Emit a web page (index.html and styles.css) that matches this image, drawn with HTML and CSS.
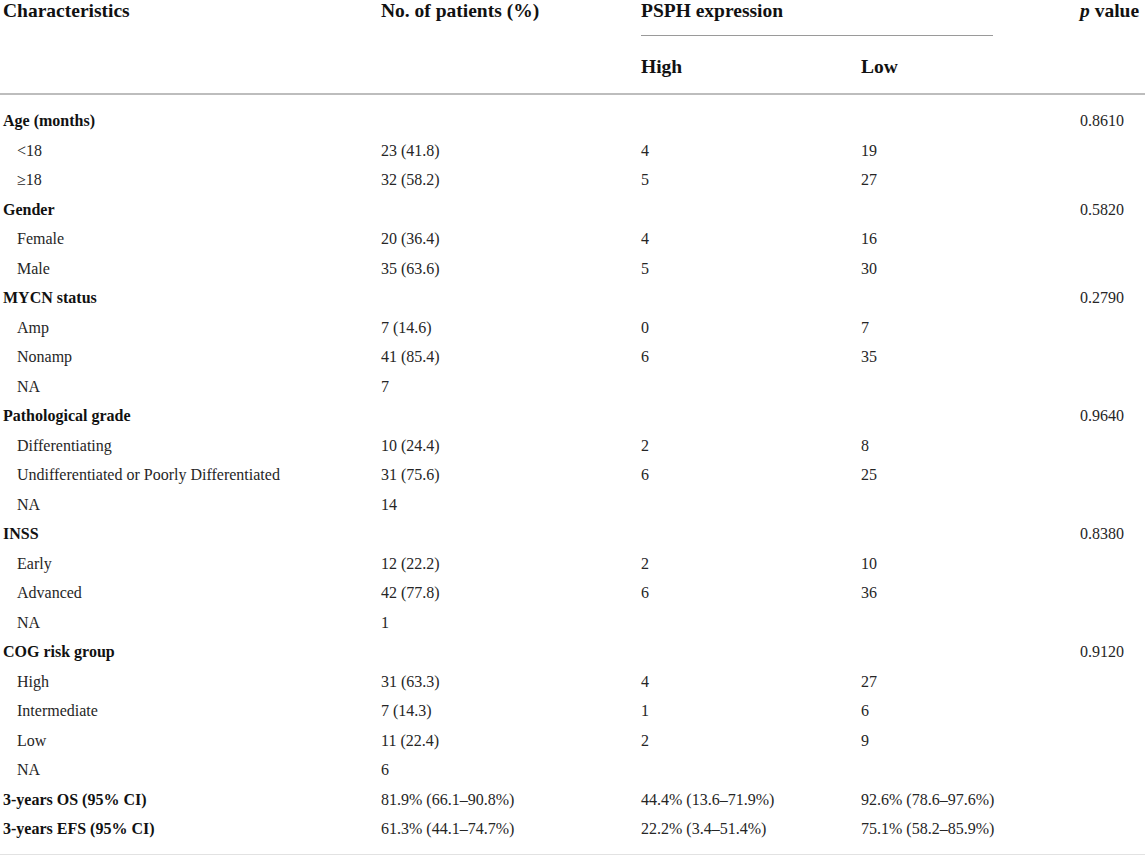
FILE: index.html
```html
<!DOCTYPE html>
<html lang="en">
<head>
<meta charset="utf-8">
<title>PSPH expression table</title>
<link rel="stylesheet" href="styles.css">
</head>
<body>
<table class="tbl">
  <colgroup>
    <col class="c1"><col class="c2"><col class="c3"><col class="c4"><col class="c5">
  </colgroup>
  <thead>
    <tr>
      <th rowspan="2">Characteristics</th>
      <th rowspan="2">No. of patients (%)</th>
      <th colspan="2" class="grp"><div class="grp-label">PSPH expression</div></th>
      <th rowspan="2"><i>p</i> value</th>
    </tr>
    <tr class="sub-head">
      <th>High</th>
      <th>Low</th>
    </tr>
  </thead>
  <tbody>
    <tr class="first"><td class="cat">Age (months)</td><td></td><td></td><td></td><td>0.8610</td></tr>
    <tr><td class="ind">&lt;18</td><td>23 (41.8)</td><td>4</td><td>19</td><td></td></tr>
    <tr><td class="ind">≥18</td><td>32 (58.2)</td><td>5</td><td>27</td><td></td></tr>
    <tr><td class="cat">Gender</td><td></td><td></td><td></td><td>0.5820</td></tr>
    <tr><td class="ind">Female</td><td>20 (36.4)</td><td>4</td><td>16</td><td></td></tr>
    <tr><td class="ind">Male</td><td>35 (63.6)</td><td>5</td><td>30</td><td></td></tr>
    <tr><td class="cat">MYCN status</td><td></td><td></td><td></td><td>0.2790</td></tr>
    <tr><td class="ind">Amp</td><td>7 (14.6)</td><td>0</td><td>7</td><td></td></tr>
    <tr><td class="ind">Nonamp</td><td>41 (85.4)</td><td>6</td><td>35</td><td></td></tr>
    <tr><td class="ind">NA</td><td>7</td><td></td><td></td><td></td></tr>
    <tr><td class="cat">Pathological grade</td><td></td><td></td><td></td><td>0.9640</td></tr>
    <tr><td class="ind">Differentiating</td><td>10 (24.4)</td><td>2</td><td>8</td><td></td></tr>
    <tr><td class="ind">Undifferentiated or Poorly Differentiated</td><td>31 (75.6)</td><td>6</td><td>25</td><td></td></tr>
    <tr><td class="ind">NA</td><td>14</td><td></td><td></td><td></td></tr>
    <tr><td class="cat">INSS</td><td></td><td></td><td></td><td>0.8380</td></tr>
    <tr><td class="ind">Early</td><td>12 (22.2)</td><td>2</td><td>10</td><td></td></tr>
    <tr><td class="ind">Advanced</td><td>42 (77.8)</td><td>6</td><td>36</td><td></td></tr>
    <tr><td class="ind">NA</td><td>1</td><td></td><td></td><td></td></tr>
    <tr><td class="cat">COG risk group</td><td></td><td></td><td></td><td>0.9120</td></tr>
    <tr><td class="ind">High</td><td>31 (63.3)</td><td>4</td><td>27</td><td></td></tr>
    <tr><td class="ind">Intermediate</td><td>7 (14.3)</td><td>1</td><td>6</td><td></td></tr>
    <tr><td class="ind">Low</td><td>11 (22.4)</td><td>2</td><td>9</td><td></td></tr>
    <tr><td class="ind">NA</td><td>6</td><td></td><td></td><td></td></tr>
    <tr><td class="cat">3-years OS (95% CI)</td><td>81.9% (66.1–90.8%)</td><td>44.4% (13.6–71.9%)</td><td>92.6% (78.6–97.6%)</td><td></td></tr>
    <tr class="last"><td class="cat">3-years EFS (95% CI)</td><td>61.3% (44.1–74.7%)</td><td>22.2% (3.4–51.4%)</td><td>75.1% (58.2–85.9%)</td><td></td></tr>
  </tbody>
</table>
</body>
</html>
```

FILE: styles.css
```css
html, body {
  margin: 0;
  padding: 0;
  background: #ffffff;
}

body {
  font-family: "Liberation Serif", "Times New Roman", serif;
  color: #262626;
}

.tbl {
  width: 1145px;
  border-collapse: collapse;
  table-layout: fixed;
}

.c1 { width: 378px; }
.c2 { width: 260px; }
.c3 { width: 220px; }
.c4 { width: 219px; }
.c5 { width: 68px; }

.tbl th {
  font-size: 19.5px;
  font-weight: bold;
  line-height: 22px;
  text-align: left;
  vertical-align: top;
  padding: 0 0 0 3px;
  color: #111111;
  white-space: nowrap;
}

.tbl thead th.grp {
  padding-bottom: 0;
}

.grp-label {
  width: 352px;
  padding-bottom: 13px;
  border-bottom: 1px solid #9a9a9a;
}

.sub-head th {
  padding-top: 20px;
  padding-bottom: 15px;
}

.tbl thead {
  border-bottom: 2px solid #bdbdbd;
}

.tbl td {
  font-size: 16px;
  line-height: 29.5px;
  padding: 0 0 0 3px;
  vertical-align: top;
  white-space: nowrap;
}

.tbl td.cat {
  font-weight: bold;
  color: #111111;
}

.tbl td.ind {
  padding-left: 17px;
}

.tbl tr.first td {
  padding-top: 11px;
}

.tbl tr.last td {
  padding-bottom: 10px;
}

.tbl tbody {
  border-bottom: 1px solid #e2e2e2;
}
```
